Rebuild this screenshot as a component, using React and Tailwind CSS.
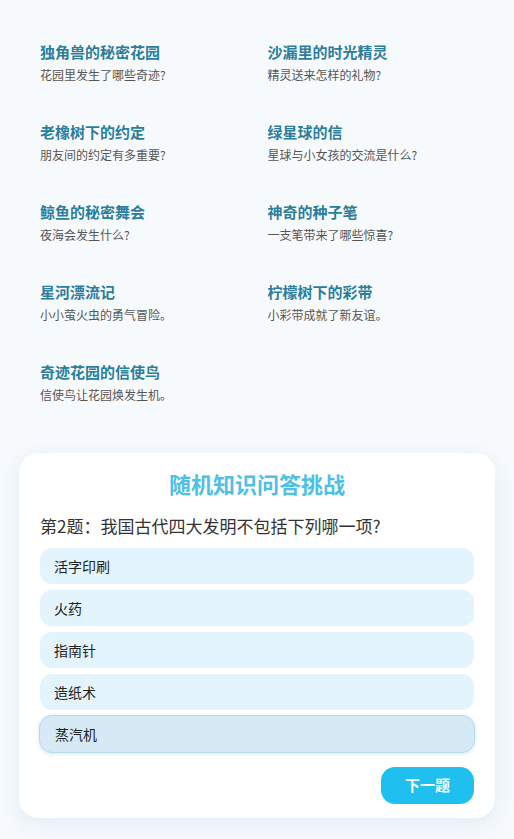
import React, { useState } from 'react';

const stories = [
    { title: '独角兽的秘密花园', desc: '花园里发生了哪些奇迹?' },
    { title: '沙漏里的时光精灵', desc: '精灵送来怎样的礼物?' },
    { title: '老橡树下的约定', desc: '朋友间的约定有多重要?' },
    { title: '绿星球的信', desc: '星球与小女孩的交流是什么?' },
    { title: '鲸鱼的秘密舞会', desc: '夜海会发生什么?' },
    { title: '神奇的种子笔', desc: '一支笔带来了哪些惊喜?' },
    { title: '星河漂流记', desc: '小小萤火虫的勇气冒险。' },
    { title: '柠檬树下的彩带', desc: '小彩带成就了新友谊。' },
    { title: '奇迹花园的信使鸟', desc: '信使鸟让花园焕发生机。' },
];

const options = ['活字印刷', '火药', '指南针', '造纸术', '蒸汽机'];

const App = () => {
    const [selected, setSelected] = useState(4);

    return (
        <div
            className="min-h-[839px] bg-[#f7fafd] pb-[21px]"
            style={{ fontFamily: '"Noto Sans CJK SC", "Noto Sans", sans-serif' }}
        >
            {/* 故事列表 */}
            <div className="grid grid-cols-2 gap-x-[21px] px-[40px] pt-[41px]">
                {stories.map(story => (
                    <div key={story.title} className="h-[80px]">
                        <div className="text-[15px] leading-[22px] font-bold text-[#2b7d9c]">{story.title}</div>
                        <div className="mt-[3px] text-[12px] leading-[18px] text-[#555]">{story.desc}</div>
                    </div>
                ))}
            </div>

            {/* 问答卡片 */}
            <div className="mx-[19px] mt-[12px] rounded-[20px] bg-white px-[21px] pt-[15px] pb-[14px] shadow-[0_6px_24px_rgba(120,170,210,0.18)]">
                <h2 className="text-center text-[22px] leading-[30px] font-bold text-[#4cc0e6]">随机知识问答挑战</h2>
                <p className="mt-[15px] text-[17px] leading-[26px] text-[#333]">第2题：我国古代四大发明不包括下列哪一项?</p>
                <div className="mt-[9px] flex flex-col">
                    {options.map((opt, i) => (
                        selected === i ? (
                            <button
                                key={opt}
                                onClick={() => setSelected(i)}
                                className="-mx-[1px] mt-[5px] flex h-[38px] items-center rounded-[13px] border border-[#b3daf0] bg-[#d6eaf5] px-[15px] text-left text-[14px] text-[#222] shadow-[0_1px_4px_rgba(100,170,220,0.25)]"
                            >
                                {opt}
                            </button>
                        ) : (
                            <button
                                key={opt}
                                onClick={() => setSelected(i)}
                                className={`flex h-[36px] items-center rounded-[12px] bg-[#e3f4fd] px-[14px] text-left text-[14px] text-[#222] ${i === 0 ? '' : 'mt-[6px]'}`}
                            >
                                {opt}
                            </button>
                        )
                    ))}
                </div>
                <div className="mt-[14px] flex justify-end">
                    <button className="h-[37px] w-[93px] rounded-[14px] bg-[#1fbff0] text-[15px] font-bold text-white">下一题</button>
                </div>
            </div>
        </div>
    );
};

export default App;
